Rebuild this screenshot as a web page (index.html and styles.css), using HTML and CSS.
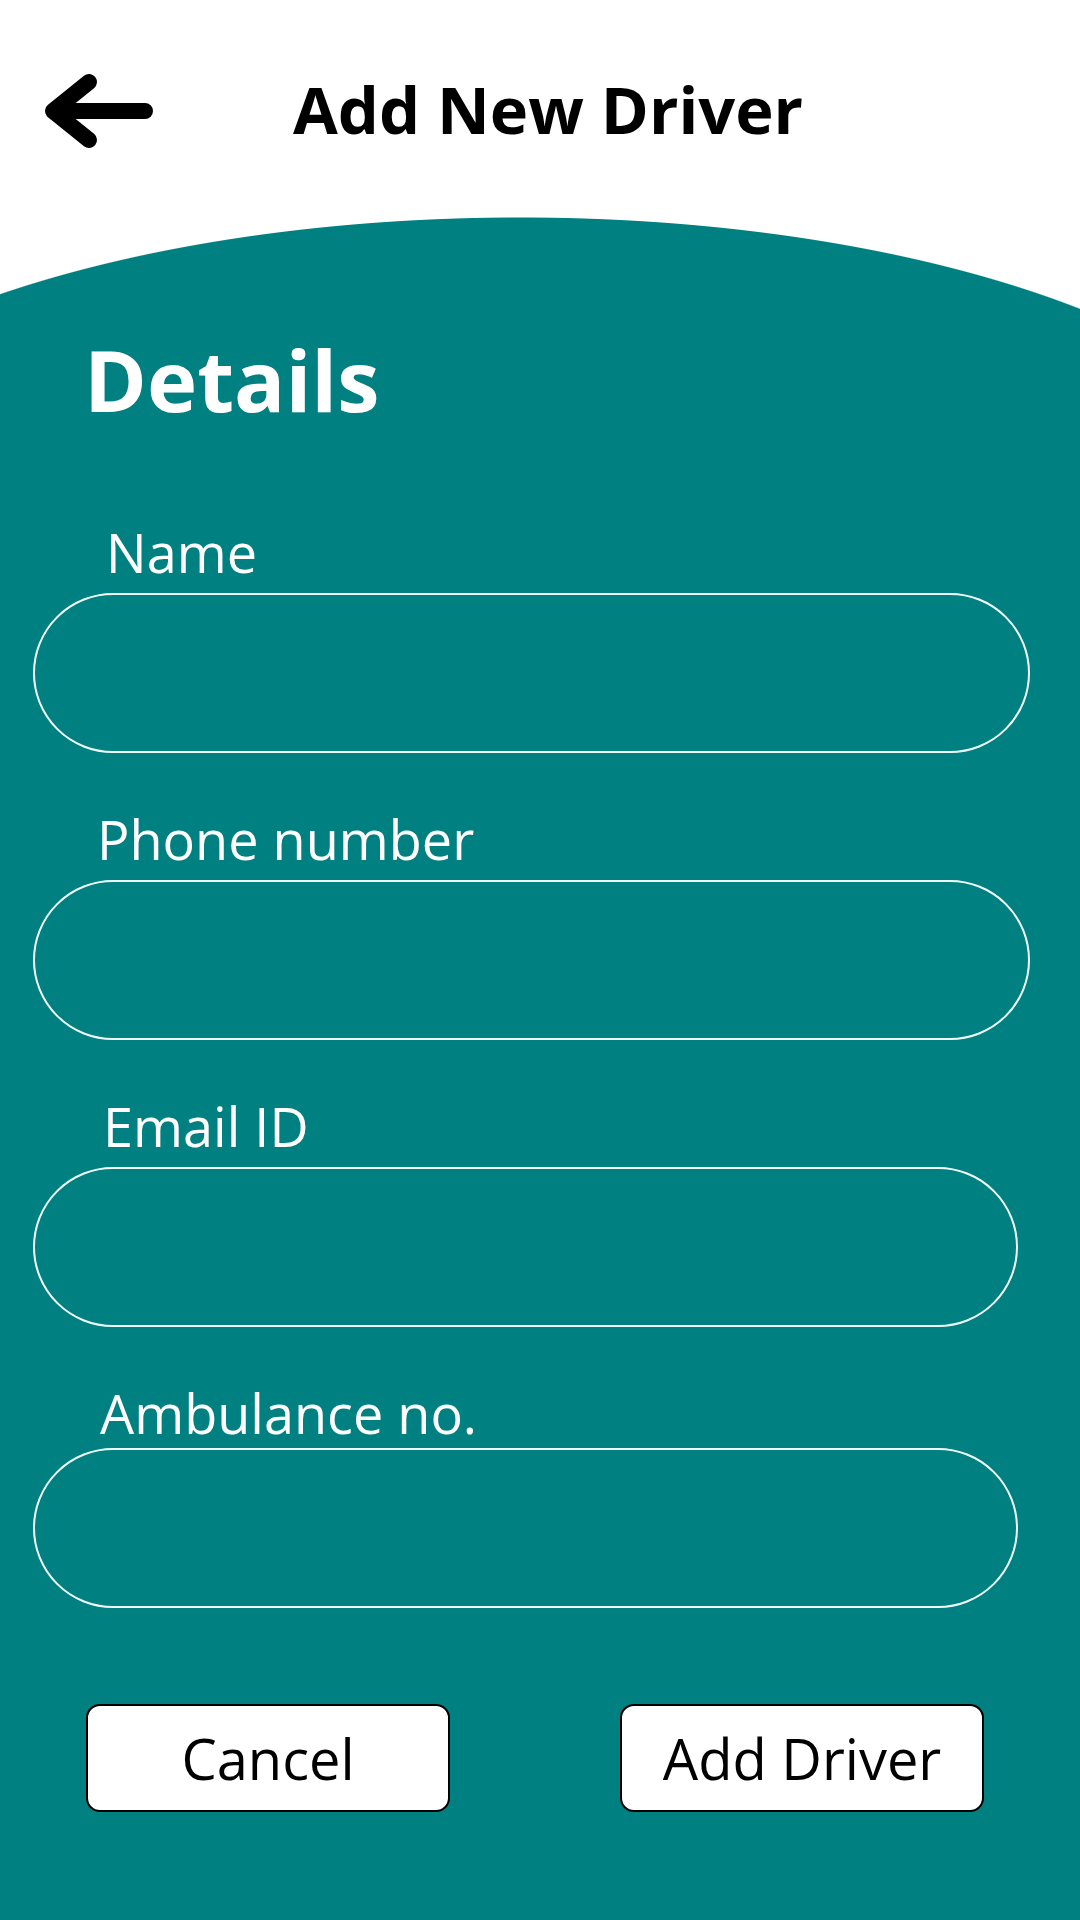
FILE: index.html
```html
<!DOCTYPE html>
<html lang="en">
<head>
<meta charset="utf-8">
<title>Add New Driver</title>
<link rel="stylesheet" href="styles.css">
</head>
<body>
<div class="page">
  <header class="topbar">
    <svg class="back" width="120" height="84" viewBox="0 0 120 84" aria-label="Back">
      <path d="M107 42 H16 M51 13 L15 42 L51 71" fill="none" stroke="#000" stroke-width="16" stroke-linecap="round" stroke-linejoin="round"/>
    </svg>
    <h1 class="title">Add New Driver</h1>
  </header>
  <main class="panel">
    <h2 class="heading">Details</h2>
    <form class="form">
      <label class="label label-name">Name</label>
      <div class="field"></div>
      <label class="label label-phone">Phone number</label>
      <div class="field"></div>
      <label class="label label-email">Email ID</label>
      <div class="field field-narrow"></div>
      <label class="label label-amb">Ambulance no.</label>
      <div class="field field-narrow"></div>
    </form>
    <div class="actions">
      <button class="btn" type="button">Cancel</button>
      <button class="btn" type="button">Add Driver</button>
    </div>
  </main>
</div>
</body>
</html>
```

FILE: styles.css
```css
* { box-sizing: border-box; }
html, body { margin: 0; padding: 0; background: #fff; }
body { width: 1080px; height: 1920px; overflow: hidden; font-family: "Open Sans", "Noto Sans", sans-serif; }

.page { display: flex; flex-direction: column; height: 1920px; }

.topbar {
  height: 217px;
  flex: none;
  display: flex;
  align-items: flex-start;
  padding: 69px 0 0 38px;
  gap: 135px;
  background: #fff;
}
.back { display: block; flex: none; }
.title {
  margin: 0;
  font-size: 65px;
  line-height: 80px;
  font-weight: 700;
  color: #000;
  letter-spacing: 0;
}

.panel {
  flex: 1;
  background:
    radial-gradient(ellipse 800px 319px at 520px 319px, #008080 99.7%, rgba(0,128,128,0) 100%) 0 0 / 100% 320px no-repeat,
    linear-gradient(#008080, #008080) 0 319px / 100% 100% no-repeat;
  padding-top: 112px;
  color: #fff;
}

.heading {
  margin: 0 0 0 84px;
  font-size: 85px;
  line-height: 100px;
  font-weight: 700;
  color: #fff;
}

.form { display: flex; flex-direction: column; padding-top: 93px; }

.label {
  display: block;
  font-size: 54px;
  line-height: 60px;
  font-weight: 400;
  color: #fff;
  margin-bottom: 11px;
}
.label-name { margin-left: 106px; }
.label-phone { margin-left: 97px; margin-top: 56px; }
.label-email { margin-left: 103px; margin-top: 56px; }
.label-amb { margin-left: 100px; margin-top: 56px; margin-bottom: 5px; }

.field {
  margin-left: 33px;
  width: 997px;
  height: 160px;
  border: 2.5px solid #f2ffff;
  border-radius: 80px;
}
.field-narrow { width: 985px; }

.actions {
  display: flex;
  gap: 170px;
  padding: 96px 0 0 86px;
}
.btn {
  width: 364px;
  height: 108px;
  background: #fff;
  border: 2px solid #000;
  border-radius: 14px;
  font-family: "Open Sans", "Noto Sans", sans-serif;
  font-size: 56px;
  font-weight: 400;
  color: #000;
  padding: 0;
  line-height: 1;
}
```
